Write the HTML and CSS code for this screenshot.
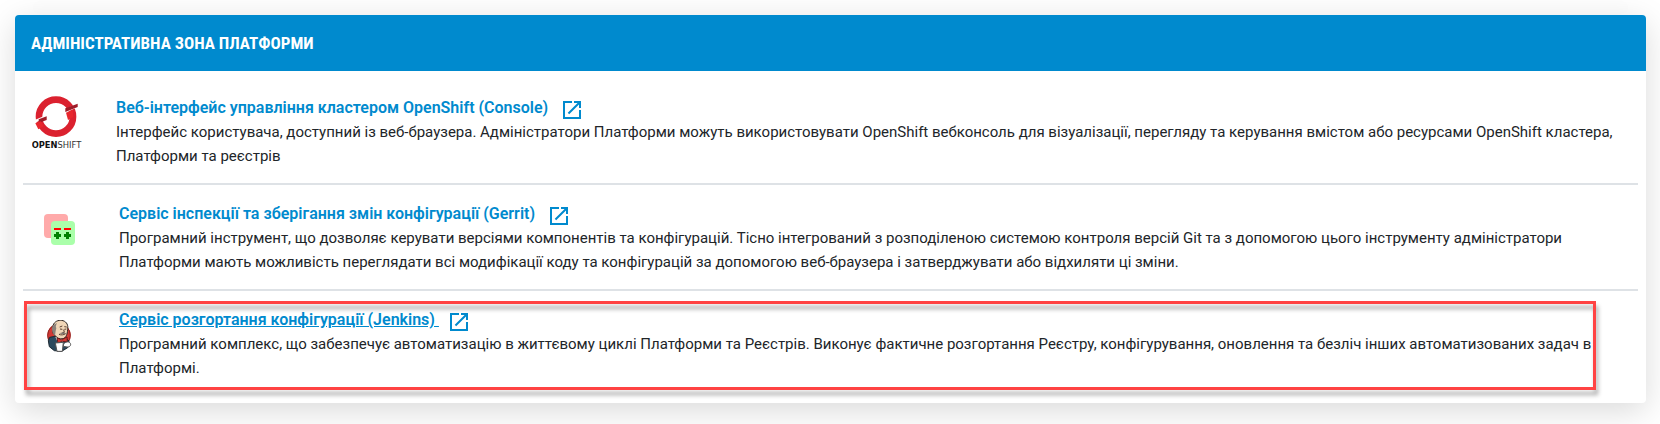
FILE: index.html
```
<!DOCTYPE html>
<html lang="uk">
<head>
<meta charset="utf-8">
<title>Адміністративна зона Платформи</title>
<link rel="stylesheet" href="styles.css">
</head>
<body>
<div class="card-edge"></div>
<section class="card">
  <h2 class="card-header">АДМІНІСТРАТИВНА ЗОНА ПЛАТФОРМИ</h2>
  <ul class="services">
    <li class="service service-wide">
      <svg class="logo-wide" viewBox="12 12 150 165" aria-hidden="true">
        <circle cx="84" cy="74" r="51" fill="none" stroke="#db212f" stroke-width="20"/>
        <path d="M20 84L54 70L56 76L22 92ZM112 52L150 34V44L114 62Z" fill="#fff"/>
        <path d="M32 82l24-9v11l-24 9z" fill="#9e1c28"/>
        <path d="M22 94l16-6 9 15-16 9z" fill="#e8262d"/>
        <path d="M114 62l20-9 2 22-16 9z" fill="#e8262d"/>
        <path d="M112 60l37-15v-10l-37 14z" fill="#9e1c28"/>
        <text class="logo-text" x="11" y="169"><tspan class="logo-bold">OPEN</tspan>SHIFT</text>
      </svg>
      <div class="service-body">
        <h3 class="service-title"><a class="link" href="#console">Веб-інтерфейс управління кластером OpenShift (Console)&nbsp;</a>
          <svg class="external" viewBox="0 0 24 24" aria-hidden="true"><path d="M19 19H5V5h7V3H3v18h18v-9h-2v7zM14 3v2h3.59l-9.83 9.83 1.41 1.41L19 6.41V10h2V3h-7z"/></svg></h3>
        <p class="service-text">Інтерфейс користувача, доступний із веб-браузера. Адміністратори Платформи можуть використовувати OpenShift вебконсоль для візуалізації, перегляду та керування вмістом або ресурсами OpenShift кластера, Платформи та реєстрів</p>
      </div>
    </li>
    <li class="service">
      <svg class="logo" viewBox="0 0 32 32" aria-hidden="true">
        <rect width="24" height="24" rx="4" fill="#faa"/>
        <rect x="7" y="7" width="24" height="24" rx="4" fill="#afa"/>
        <path d="M10 14h7v2h-7zM20 14h7v2h-7z" fill="#f00"/>
        <path d="M12 18h3v2h2v3h-2v2h-3v-2h-2v-3h2zM22 18h3v2h2v3h-2v2h-3v-2h-2v-3h2z" fill="#008000"/>
      </svg>
      <div class="service-body">
        <h3 class="service-title"><a class="link" href="#gerrit">Сервіс інспекції та зберігання змін конфігурації (Gerrit)&nbsp;</a>
          <svg class="external" viewBox="0 0 24 24" aria-hidden="true"><path d="M19 19H5V5h7V3H3v18h18v-9h-2v7zM14 3v2h3.59l-9.83 9.83 1.41 1.41L19 6.41V10h2V3h-7z"/></svg></h3>
        <p class="service-text">Програмний інструмент, що дозволяє керувати версіями компонентів та конфігурацій. Тісно інтегрований з розподіленою системою контроля версій Git та з допомогою цього інструменту адміністратори Платформи мають можливість переглядати всі модифікації коду та конфігурацій за допомогою веб-браузера і затверджувати або відхиляти ці зміни.</p>
      </div>
    </li>
    <li class="service service-marked">
      <svg class="logo" viewBox="0 0 96 96" aria-hidden="true">
        <circle cx="45" cy="46" r="35" fill="#d33833"/>
        <circle cx="45" cy="46" r="34" fill="none" stroke="#8c2420" stroke-width="3"/>
        <path d="M17 52l16-3 20 12 14-6 8 8-4 20-18 11-22-2-15-12-3-18z" fill="#2c4a5e" stroke="#1d2a33" stroke-width="3"/>
        <path d="M34 50l6 14 14 6 7-16z" fill="#fff"/>
        <path d="M29 12C35 2 47-1 57 2c12 4 16 14 14 27-1 14-5 25-14 27-10 2-20-2-24-10-6-4-8-10-6-15-1-7-1-13 2-19z" fill="#f0d6b7" stroke="#2d2622" stroke-width="3"/>
        <path d="M28 15c-4 5-5 11-3 18 1 6 4 11 8 14l2-14 2-9c-3-3-1-9 2-15z" fill="#8a827b"/>
        <path d="M47 21l8-3M61 20l7 1M48 27l7 1M61 28l6-1M59 29l2 8-6 1M45 43c6 3 14 2 20-2" fill="none" stroke="#5a4032" stroke-width="3"/>
        <path d="M45 40l12-3 10 4-10 2z" fill="#817870"/>
        <path d="M39 54l14 5 16-8 1 15-15-2-13 5z" fill="#d33833" stroke="#6e1a18" stroke-width="3"/>
        <path d="M34 69l24-2-3 27H39z" fill="#fff" stroke="#555" stroke-width="3"/>
        <path d="M59 72c6-7 16-9 20-2 3 6-2 12-10 11l-11-2z" fill="#fff" stroke="#555" stroke-width="3"/>
      </svg>
      <div class="service-body">
        <h3 class="service-title"><a class="link link-active" href="#jenkins">Сервіс розгортання конфігурації (Jenkins)&nbsp;</a>
          <svg class="external" viewBox="0 0 24 24" aria-hidden="true"><path d="M19 19H5V5h7V3H3v18h18v-9h-2v7zM14 3v2h3.59l-9.83 9.83 1.41 1.41L19 6.41V10h2V3h-7z"/></svg></h3>
        <p class="service-text">Програмний комплекс, що забезпечує автоматизацію в життєвому циклі Платформи та Реєстрів. Виконує фактичне розгортання Реєстру, конфігурування, оновлення та безліч інших автоматизованих задач в Платформі.</p>
      </div>
      <div class="marker"></div>
    </li>
  </ul>
</section>
</body>
</html>
```
FILE: styles.css
```
* { box-sizing: border-box; }

body {
  display: flow-root;
  min-height: 100vh;
  margin: 0;
  padding: 0 14px 0 15px;
  background: #fff;
  color: #212529;
  font: 15px/24px Roboto, "Noto Sans", sans-serif;
}

.card-edge,
.card {
  border-radius: 4px;
  box-shadow: 0 8px 32px rgba(0, 0, 0, 0.15);
}

.card-edge {
  height: 1px;
  margin: -1px 0 15px;
}

.card { background: #fff; }

.card-header {
  margin: 0;
  padding: 16px;
  border-radius: 4px 4px 0 0;
  background: #008ace;
  color: #fff;
  font: bold 17px/24px "Roboto Condensed", "Liberation Sans Narrow", sans-serif;
}

.services {
  margin: 0;
  padding: 8px;
  list-style: none;
}

.service {
  position: relative;
  display: grid;
  grid-template-columns: 87px 1fr;
  padding: 17px 40px 15px 9px;
  border-bottom: 2px solid #dee2e6;
}

.service:last-child { border-bottom: 0; }

.service-wide {
  grid-template-columns: 84px 1fr;
  padding-right: 16px;
}

.logo-wide {
  width: 50px;
  height: 55px;
}

.logo-text {
  fill: #333;
  font: 25px "DejaVu Sans", sans-serif;
}

.logo-bold {
  fill: #111;
  font-weight: 700;
}

.logo {
  width: 32px;
  height: 32px;
  margin: 12px;
}

.service-title {
  display: flex;
  gap: 8px;
  height: 24px;
  margin: 0;
  font-size: 16px;
  font-weight: 600;
  line-height: 24px;
}

.link {
  color: #008ace;
  text-decoration: none;
}

.link-active { text-decoration: underline; }

.external {
  width: 24px;
  height: 24px;
  margin-top: 2px;
  fill: #008ace;
}

.service-text { margin: 0; }

.marker {
  position: absolute;
  inset: 10px 42px 5px 1px;
  border: 3px solid #ff4343;
  filter: drop-shadow(2px 5px 2px rgba(0, 0, 0, 0.35));
  pointer-events: none;
}
```
